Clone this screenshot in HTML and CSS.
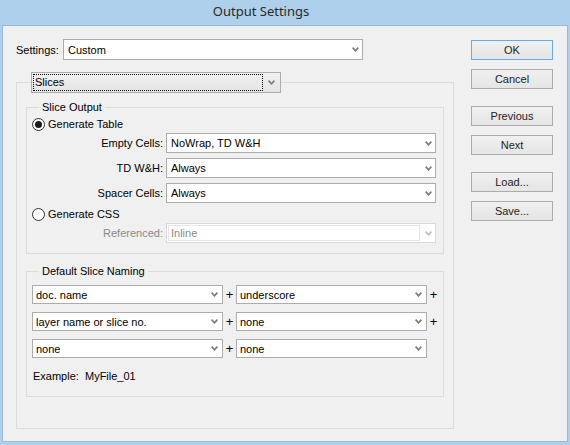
FILE: index.html
```html
<!DOCTYPE html>
<html lang="en">
<head>
    <meta charset="UTF-8">
    <title>Output Settings</title>
    <link rel="stylesheet" href="styles.css">
</head>
<body>

<div class="window">
    <div class="titlebar">Output Settings</div>

    <div class="client">
        <!-- Left side: settings and groups -->
        <div class="main">
            <div class="settings-row">
                <span class="settings-label">Settings:</span>
                <div class="combo settings-combo">
                    <span class="value">Custom</span>
                    <svg class="arrow" width="7" height="5" viewBox="0 0 7 5"><path d="M0.6 0.6 L3.5 3.8 L6.4 0.6"/></svg>
                </div>
            </div>

            <fieldset class="group outer">
                <legend class="dropdown">
                    <div class="dropdown-inner">
                        <span class="focus">Slices</span>
                        <svg class="arrow" width="7" height="5" viewBox="0 0 7 5"><path d="M0.6 0.6 L3.5 3.8 L6.4 0.6"/></svg>
                    </div>
                </legend>

                <!-- Slice Output -->
                <fieldset class="group output">
                    <legend>Slice Output</legend>

                    <div class="radio-row"><span class="radio checked"></span>Generate Table</div>

                    <div class="field first">
                        <label>Empty Cells:</label>
                        <div class="combo">
                            <span class="value">NoWrap, TD W&amp;H</span>
                            <svg class="arrow" width="7" height="5" viewBox="0 0 7 5"><path d="M0.6 0.6 L3.5 3.8 L6.4 0.6"/></svg>
                        </div>
                    </div>
                    <div class="field">
                        <label>TD W&amp;H:</label>
                        <div class="combo">
                            <span class="value">Always</span>
                            <svg class="arrow" width="7" height="5" viewBox="0 0 7 5"><path d="M0.6 0.6 L3.5 3.8 L6.4 0.6"/></svg>
                        </div>
                    </div>
                    <div class="field">
                        <label>Spacer Cells:</label>
                        <div class="combo">
                            <span class="value">Always</span>
                            <svg class="arrow" width="7" height="5" viewBox="0 0 7 5"><path d="M0.6 0.6 L3.5 3.8 L6.4 0.6"/></svg>
                        </div>
                    </div>

                    <div class="radio-row css-row"><span class="radio"></span>Generate CSS</div>

                    <div class="field first disabled">
                        <label>Referenced:</label>
                        <div class="combo">
                            <span class="edit">Inline</span>
                            <svg class="arrow" width="7" height="5" viewBox="0 0 7 5"><path d="M0.6 0.6 L3.5 3.8 L6.4 0.6"/></svg>
                        </div>
                    </div>
                </fieldset>

                <!-- Default Slice Naming -->
                <fieldset class="group naming">
                    <legend>Default Slice Naming</legend>

                    <div class="name-row">
                        <div class="combo small"><span class="value">doc. name</span><svg class="arrow" width="7" height="5" viewBox="0 0 7 5"><path d="M0.6 0.6 L3.5 3.8 L6.4 0.6"/></svg></div>
                        <span class="plus">+</span>
                        <div class="combo small"><span class="value">underscore</span><svg class="arrow" width="7" height="5" viewBox="0 0 7 5"><path d="M0.6 0.6 L3.5 3.8 L6.4 0.6"/></svg></div>
                        <span class="plus">+</span>
                    </div>
                    <div class="name-row">
                        <div class="combo small"><span class="value">layer name or slice no.</span><svg class="arrow" width="7" height="5" viewBox="0 0 7 5"><path d="M0.6 0.6 L3.5 3.8 L6.4 0.6"/></svg></div>
                        <span class="plus">+</span>
                        <div class="combo small"><span class="value">none</span><svg class="arrow" width="7" height="5" viewBox="0 0 7 5"><path d="M0.6 0.6 L3.5 3.8 L6.4 0.6"/></svg></div>
                        <span class="plus">+</span>
                    </div>
                    <div class="name-row">
                        <div class="combo small"><span class="value">none</span><svg class="arrow" width="7" height="5" viewBox="0 0 7 5"><path d="M0.6 0.6 L3.5 3.8 L6.4 0.6"/></svg></div>
                        <span class="plus">+</span>
                        <div class="combo small"><span class="value">none</span><svg class="arrow" width="7" height="5" viewBox="0 0 7 5"><path d="M0.6 0.6 L3.5 3.8 L6.4 0.6"/></svg></div>
                        <span class="plus"></span>
                    </div>

                    <p class="example">Example:&nbsp; MyFile_01</p>
                </fieldset>
            </fieldset>
        </div>

        <!-- Right side: buttons -->
        <div class="buttons">
            <button class="default">OK</button>
            <button>Cancel</button>
            <button class="spaced">Previous</button>
            <button>Next</button>
            <button class="spaced">Load...</button>
            <button>Save...</button>
        </div>
    </div>
</div>

</body>
</html>
```

FILE: styles.css
```css
* {
    margin: 0;
    padding: 0;
    box-sizing: border-box;
}

body {
    background-color: #aed0ec;
    width: 570px;
    height: 445px;
    overflow: hidden;
    font-family: 'Liberation Sans', Arial, sans-serif;
    font-size: 11px;
    color: #000;
}

.window {
    width: 570px;
    height: 445px;
}

.titlebar {
    height: 25px;
    line-height: 22px;
    padding-right: 48px;
    text-align: center;
    font-family: 'Noto Sans', sans-serif;
    font-size: 13px;
    color: #2a2a2a;
}

.client {
    display: flex;
    margin-left: 2px;
    width: 566px;
    height: 417px;
    background: #f0f0f0;
    border: 1px solid #98b9d6;
    padding: 13px 0 0 13px;
}

.main {
    width: 438px;
}

/* Settings row */
.settings-row {
    display: flex;
    align-items: center;
    height: 21px;
}

.settings-label {
    width: 47px;
}

.settings-combo {
    width: 300px;
    height: 21px !important;
}

/* Combo boxes */
.combo {
    display: flex;
    align-items: center;
    justify-content: space-between;
    height: 20px;
    background: #fff;
    border: 1px solid #acacac;
    padding: 0 3px 0 4px;
    white-space: nowrap;
}

.arrow {
    flex: none;
    fill: none;
    stroke: #7d7d7d;
    stroke-width: 1.7;
}

/* Group boxes */
.group {
    border: 1px solid #dcdcdc;
    margin: 0;
    min-width: 0;
}

.group legend {
    padding: 0 3px;
    line-height: 13px;
    margin-left: 7px;
}

.outer {
    margin-top: 12px;
    padding: 8px 9px 31px 9px;
}

.outer > legend.dropdown {
    margin-left: 5px;
    padding: 0;
    line-height: normal;
}

.dropdown-inner {
    display: flex;
    align-items: center;
    width: 250px;
    height: 21px;
    padding: 1px;
    border: 1px solid #acacac;
    background: linear-gradient(#f0f0f0, #e5e5e5);
}

.focus {
    width: 230px;
    height: 17px;
    line-height: 15px;
    border: 1px dotted #000;
    padding-left: 1px;
}

.dropdown-inner .arrow {
    margin-left: 5px;
}

.output {
    padding: 2px 7px 10px 5px;
}

.radio-row {
    display: flex;
    align-items: center;
    height: 16px;
}

.css-row {
    margin-top: 3px;
}

.radio {
    width: 13px;
    height: 13px;
    border: 1px solid #333;
    border-radius: 50%;
    background: #fff;
    margin-right: 3px;
    display: flex;
    align-items: center;
    justify-content: center;
}

.radio.checked::after {
    content: "";
    width: 7px;
    height: 7px;
    border-radius: 50%;
    background: #1a1a1a;
}

.field {
    display: flex;
    align-items: center;
    margin-top: 5px;
}

.field.first {
    margin-top: 1px;
}

.field label {
    width: 131px;
    margin-right: 3px;
    text-align: right;
}

.field .combo {
    width: 270px;
}

.disabled label {
    color: #8a8a8a;
}

.disabled .combo {
    border-color: #d9d9d9;
    padding: 1px 3px 1px 1px;
}

.disabled .edit {
    flex: 1;
    height: 100%;
    border: 1px solid #e6e6e6;
    color: #8a8a8a;
    padding-left: 2px;
    line-height: 14px;
    margin-right: 5px;
}

.disabled .arrow {
    stroke: #bdbdbd;
}

/* Default Slice Naming */
.naming {
    margin-top: 11px;
    padding: 7px 3px 13px 5px;
}

.name-row {
    display: flex;
    align-items: center;
    margin-bottom: 8px;
}

.combo.small {
    width: 191px;
    height: 19px;
    padding-left: 3px;
    padding-right: 4px;
}

.plus {
    width: 13px;
    text-align: center;
    font-size: 13px;
    line-height: 13px;
}

.example {
    margin-top: 12px;
    line-height: 13px;
    padding-left: 1px;
}

/* Buttons */
.buttons {
    margin-left: 17px;
    padding-top: 1px;
    display: flex;
    flex-direction: column;
}

button {
    width: 82px;
    height: 20px;
    margin-bottom: 9px;
    border: 1px solid #acacac;
    background: linear-gradient(#f0f0f0, #e5e5e5);
    font-family: 'Liberation Sans', Arial, sans-serif;
    font-size: 11px;
    font-weight: 400;
    color: #222;
}

button.default {
    border-color: #64aaec;
}

button.spaced {
    margin-top: 8px;
}
```
